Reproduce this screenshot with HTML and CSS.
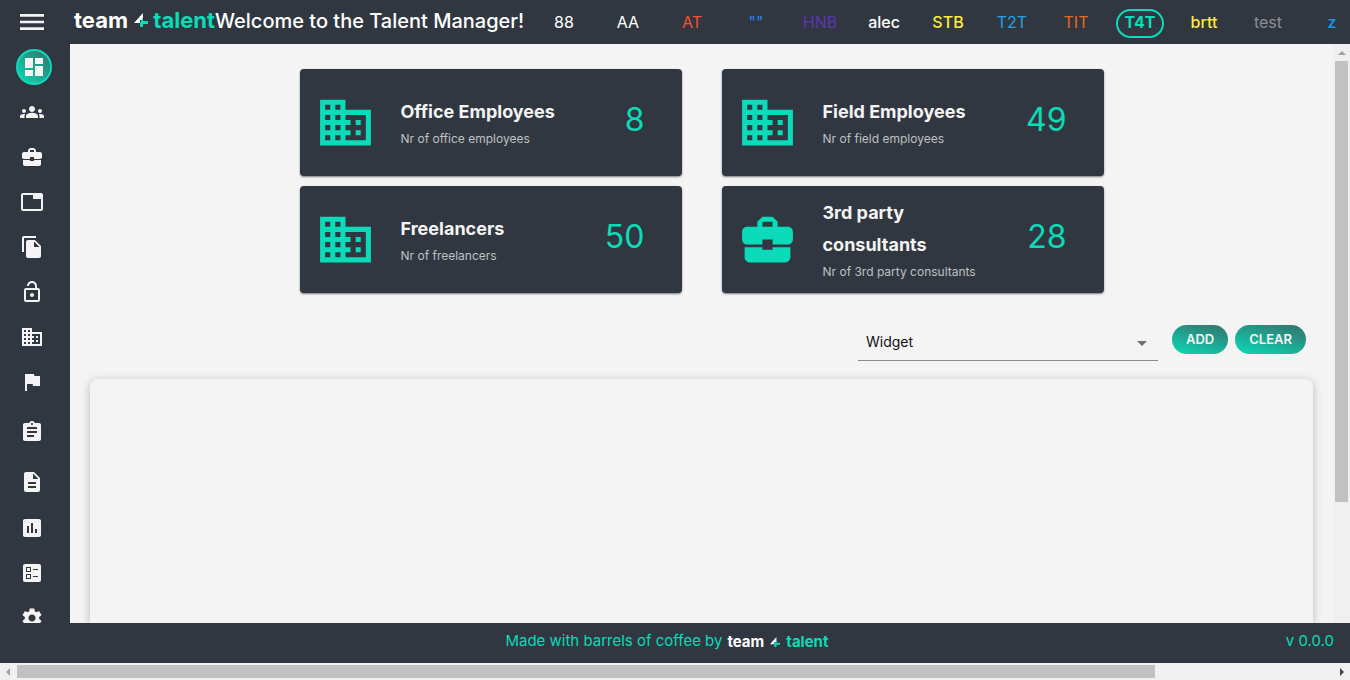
FILE: index.html
```html
<!DOCTYPE html>
<html lang="en">
<head>
<meta charset="utf-8">
<title>Talent Manager</title>
<link rel="stylesheet" href="styles.css">
</head>
<body>
<svg class="defs" aria-hidden="true">
  <symbol id="building" viewBox="0 0 24 24"><path d="M12 7V3H2v18h20V7H12zM6 19H4v-2h2v2zm0-4H4v-2h2v2zm0-4H4V9h2v2zm0-4H4V5h2v2zm4 12H8v-2h2v2zm0-4H8v-2h2v2zm0-4H8V9h2v2zm0-4H8V5h2v2zm10 12h-8v-2h2v-2h-2v-2h2v-2h-2V9h8v10zm-2-8h-2v2h2v-2zm0 4h-2v2h2v-2z"/></symbol>
  <symbol id="case" viewBox="0 0 24 24"><path d="M10 16v-1H3.010L3 19c0 1.110.89 2 2 2h14c1.110 0 2-.89 2-2v-4h-7v1h-4zm10-9h-4.010V5l-2-2h-4l-2 2v2H4c-1.100 0-2 .9-2 2v3c0 1.110.89 2 2 2h6v-2h4v2h6c1.100 0 2-.9 2-2V9c0-1.100-.9-2-2-2zm-6 0h-4V5h4v2z"/></symbol>
  <symbol id="bolt" viewBox="0 0 14 14"><path fill="#fff" d="M9 0v7H6v3H0z"/><path class="accent" d="M9 4v4h5v3H9v3H6v-4z"/></symbol>
</svg>
<header class="topbar">
  <button class="menu" aria-label="Menu"><svg viewBox="0 0 24 24"><path d="M3 18h18v-2H3v2zm0-5h18v-2H3v2zm0-7v2h18V6H3z"/></svg></button>
  <a class="logo" href="#"><span>team</span><svg><use href="#bolt"/></svg><span class="talent">talent</span></a>
  <h1>Welcome to the Talent Manager!</h1>
  <nav class="teams" aria-label="Teams">
    <a href="#">88</a><a href="#">AA</a><a class="red" href="#">AT</a><a class="blue" href="#">""</a><a class="purple" href="#">HNB</a><a class="medium" href="#">alec</a><a class="yellow medium" href="#">STB</a><a class="sky" href="#">T2T</a><a class="orange" href="#">TIT</a><a class="current" href="#"><span>T4T</span></a><a class="yellow medium" href="#">brtt</a><a class="grey" href="#">test</a><a class="azure medium" href="#">z</a>
  </nav>
</header>
<div class="middle">
  <nav class="sidebar" aria-label="Main">
    <a class="active" href="#" aria-label="Dashboard"><svg viewBox="0 0 24 24"><path d="M3 13h8V3H3v10zm0 8h8v-6H3v6zm10 0h8V11h-8v10zm0-18v6h8V3h-8z"/></svg></a>
    <a href="#" aria-label="Groups"><svg viewBox="0 0 24 24"><path d="M12 12.750c1.630 0 3.070.39 4.240.9 1.080.48 1.760 1.560 1.760 2.730V18H6v-1.610c0-1.180.68-2.260 1.760-2.730 1.170-.52 2.610-.91 4.240-.91zM4 13c1.100 0 2-.9 2-2s-.9-2-2-2-2 .9-2 2 .9 2 2 2zm1.130 1.100C4.760 14.040 4.390 14 4 14c-.99 0-1.930.21-2.780.58C.48 14.900 0 15.620 0 16.430V18h4.500v-1.610c0-.83.23-1.610.63-2.290zM20 13c1.100 0 2-.9 2-2s-.9-2-2-2-2 .9-2 2 .9 2 2 2zm4 3.430c0-.81-.48-1.530-1.220-1.850-.85-.37-1.790-.58-2.780-.58-.39 0-.76.04-1.130.1.400.68.630 1.460.630 2.290V18H24v-1.570zM12 6c1.660 0 3 1.340 3 3s-1.340 3-3 3-3-1.340-3-3 1.340-3 3-3z"/></svg></a>
    <a href="#" aria-label="Jobs"><svg><use href="#case"/></svg></a>
    <a href="#" aria-label="Tabs"><svg viewBox="0 0 24 24"><path d="M21 3H3c-1.100 0-2 .9-2 2v14c0 1.100.9 2 2 2h18c1.100 0 2-.9 2-2V5c0-1.100-.9-2-2-2zm0 16H3V5h10v4h8v10z"/></svg></a>
    <a href="#" aria-label="Files"><svg viewBox="0 0 24 24"><path d="M16 1H4c-1.100 0-2 .9-2 2v14h2V3h12V1zm-1 4l6 6v10c0 1.100-.9 2-2 2H7.990C6.890 23 6 22.100 6 21l.01-14c0-1.100.89-2 1.990-2h7zm-1 7h5.500L14 6.500V12z"/></svg></a>
    <a href="#" aria-label="Access"><svg viewBox="0 0 24 24"><path d="M12 17c1.100 0 2-.9 2-2s-.9-2-2-2-2 .9-2 2 .9 2 2 2zm6-9h-1V6c0-2.760-2.240-5-5-5S7 3.240 7 6h1.900c0-1.710 1.390-3.100 3.100-3.100s3.100 1.390 3.100 3.100v2H6c-1.100 0-2 .9-2 2v10c0 1.100.9 2 2 2h12c1.100 0 2-.9 2-2V10c0-1.100-.9-2-2-2zm0 12H6V10h12v10z"/></svg></a>
    <a href="#" aria-label="Companies"><svg><use href="#building"/></svg></a>
    <a href="#" aria-label="Flags"><svg viewBox="0 0 24 24"><path d="M14.400 6L14 4H5v17h2v-7h5.600l.4 2h7V6z"/></svg></a>
    <a class="tall" href="#" aria-label="Tasks"><svg viewBox="0 0 24 24"><path d="M19 3h-4.180C14.400 1.840 13.300 1 12 1c-1.300 0-2.400.84-2.820 2H5c-1.100 0-2 .9-2 2v14c0 1.100.9 2 2 2h14c1.100 0 2-.9 2-2V5c0-1.100-.9-2-2-2zm-7 0c.55 0 1 .45 1 1s-.45 1-1 1-1-.45-1-1 .45-1 1-1zm2 14H7v-2h7v2zm3-4H7v-2h10v2zm0-4H7V7h10v2z"/></svg></a>
    <a class="doc" href="#" aria-label="Documents"><svg viewBox="0 0 24 24"><path d="M14 2H6c-1.100 0-1.990.9-1.990 2L4 20c0 1.100.89 2 1.990 2H18c1.100 0 2-.9 2-2V8l-6-6zm2 16H8v-2h8v2zm0-4H8v-2h8v2zm-3-5V3.500L18.500 9H13z"/></svg></a>
    <a href="#" aria-label="Statistics"><svg viewBox="0 0 24 24"><path d="M19 3H5c-1.100 0-2 .9-2 2v14c0 1.100.9 2 2 2h14c1.100 0 2-.9 2-2V5c0-1.100-.9-2-2-2zM9 17H7v-7h2v7zm4 0h-2V7h2v10zm4 0h-2v-4h2v4z"/></svg></a>
    <a href="#" aria-label="Forms"><svg viewBox="0 0 24 24"><path fill-rule="evenodd" d="M5 3h14a2 2 0 0 1 2 2v14a2 2 0 0 1-2 2H5a2 2 0 0 1-2-2V5a2 2 0 0 1 2-2zM6 6v5h5V6zm1 1h3v3H7zM6 13v5h5v-5zm1 1h3v3H7zM13 8v1h5V8zm0 7v1h5v-1z"/></svg></a>
    <a href="#" aria-label="Settings"><svg viewBox="0 0 24 24"><path d="M19.140 12.940c.04-.3.060-.61.060-.94 0-.32-.02-.64-.07-.94l2.030-1.580c.18-.14.23-.41.120-.61l-1.920-3.320c-.12-.22-.37-.29-.59-.22l-2.390.96c-.5-.38-1.030-.7-1.620-.94l-.36-2.540c-.04-.24-.24-.41-.48-.41h-3.840c-.24 0-.43.17-.47.410l-.36 2.540c-.59.240-1.130.570-1.620.940l-2.390-.96c-.22-.08-.47 0-.59.220L2.740 8.870c-.12.210-.08.470.120.610l2.030 1.580c-.05.300-.09.630-.09.940s.02.640.07.940l-2.030 1.580c-.18.140-.23.410-.12.610l1.920 3.320c.12.220.37.290.59.220l2.390-.96c.5.380 1.030.7 1.620.940l.36 2.540c.05.240.24.410.48.410h3.840c.24 0 .44-.17.470-.41l.36-2.540c.59-.24 1.130-.56 1.620-.94l2.390.96c.22.080.47 0 .59-.22l1.920-3.320c.12-.22.070-.47-.12-.61l-2.010-1.580zM12 15.600c-1.980 0-3.600-1.620-3.600-3.600s1.620-3.600 3.600-3.600 3.600 1.620 3.600 3.600-1.620 3.600-3.600 3.600z"/></svg></a>
  </nav>
  <main>
    <section class="cards" aria-label="Totals">
      <article class="card"><svg><use href="#building"/></svg><div class="label"><h2>Office Employees</h2><p>Nr of office employees</p></div><strong>8</strong></article>
      <article class="card"><svg><use href="#building"/></svg><div class="label"><h2>Field Employees</h2><p>Nr of field employees</p></div><strong>49</strong></article>
      <article class="card"><svg><use href="#building"/></svg><div class="label"><h2>Freelancers</h2><p>Nr of freelancers</p></div><strong>50</strong></article>
      <article class="card"><svg><use href="#case"/></svg><div class="label"><h2>3rd party consultants</h2><p>Nr of 3rd party consultants</p></div><strong>28</strong></article>
    </section>
    <form class="controls">
      <div class="picker"><select aria-label="Widget"><option>Widget</option></select></div>
      <button class="pill" type="button">ADD</button>
      <button class="pill" type="button">CLEAR</button>
    </form>
    <section class="board" aria-label="Widgets"></section>
  </main>
  <div class="bar vertical" aria-hidden="true"><i class="arrow up"></i><div class="track"><div class="thumb"></div></div></div>
</div>
<footer>
  <p class="made">Made with barrels of coffee by <a class="logo small" href="#"><span>team</span><svg><use href="#bolt"/></svg><span class="talent">talent</span></a></p>
  <p class="version">v 0.0.0</p>
</footer>
<div class="bar horizontal" aria-hidden="true"><i class="arrow left"></i><div class="track"><div class="thumb"></div></div><i class="arrow right"></i></div>
</body>
</html>
```
FILE: styles.css
```css
* { box-sizing: border-box; }
:root { --dark: #313740; --light: #f4f4f4; --accent: #0adbb8; --shade: linear-gradient(to top right, #0adbb8, #357069); }
body { margin: 0; height: 100vh; display: flex; flex-direction: column; overflow: hidden; background: var(--light); font-family: Inter, "Open Sans", sans-serif; }
h1, h2, p { margin: 0; }
a { color: inherit; text-decoration: none; }
button { border: 0; font-family: inherit; cursor: pointer; }
.defs { position: absolute; width: 0; height: 0; }
.accent { fill: var(--accent); }

.topbar { flex: none; height: 44px; display: flex; align-items: center; background: var(--dark); color: #fff; overflow: hidden; }
.menu { flex: none; width: 74px; height: 44px; padding: 0 0 0 16px; background: none; display: flex; align-items: center; }
.menu svg { width: 32px; height: 32px; fill: var(--light); }
.logo { flex: none; display: flex; align-items: center; justify-content: space-between; width: 141px; font-size: 22px; line-height: 24px; font-weight: 700; color: #fff; padding-bottom: 4px; }
.logo svg { width: 14px; height: 14px; }
.talent { color: var(--accent); }
h1 { flex: none; width: 317px; padding-bottom: 2px; font-size: 20px; line-height: 24px; font-weight: 500; white-space: nowrap; }
.teams { flex: none; display: flex; font-size: 16px; line-height: 24px; }
.teams a { width: 64px; height: 44px; display: flex; align-items: center; justify-content: center; }
.medium { font-weight: 500; }
.red { color: #f4512c; }
.blue { color: #2d7ff0; }
.purple { color: #5e35b1; }
.yellow { color: #ffeb3b; }
.sky { color: #1fa2e8; }
.orange { color: #e8681e; }
.grey { color: #8d8d92; }
.azure { color: #0d9df5; }
.current { color: var(--accent); font-weight: 700; }
.current span { width: 48px; height: 29px; margin-top: 3px; border: 2px solid; border-radius: 15px; text-align: center; line-height: 22px; }

.middle { flex: 1; min-height: 0; display: flex; }
.sidebar { flex: none; width: 70px; background: var(--dark); overflow: hidden; padding-left: 16px; }
.sidebar a { height: 45px; width: 32px; display: flex; align-items: center; justify-content: center; }
.sidebar svg { width: 24px; height: 24px; fill: var(--light); }
.sidebar .active { width: 36px; height: 36px; margin: 5px 0 4px; border: 2px solid var(--accent); border-radius: 50%; background: var(--shade); }
.sidebar .tall { height: 55px; }
.sidebar .doc { height: 46px; }

main { flex: 1; min-width: 0; padding: 25px 20px 0; display: flex; flex-direction: column; overflow: hidden; }
.cards { width: 100%; max-width: 804px; margin: 0 auto; display: grid; grid-template-columns: 1fr 1fr; gap: 10px 40px; }
.card { min-height: 107px; padding: 0 37px 0 15px; display: flex; align-items: center; background: var(--dark); border-radius: 4px; box-shadow: 0 1px 2px rgba(0, 0, 0, .5); }
.card svg { flex: none; width: 61px; height: 61px; fill: var(--accent); margin-right: 25px; }
.label { width: 164px; }
.label h2 { font-size: 18px; line-height: 32px; font-weight: 700; color: var(--light); }
.label p { font-size: 12px; line-height: 22px; color: #bfc0c2; white-space: nowrap; }
.card strong { margin-left: auto; padding-bottom: 6px; font-size: 32px; line-height: 40px; font-weight: 400; color: var(--accent); }

.controls { margin: 32px 7px 0 0; display: flex; justify-content: flex-end; gap: 7px; }
.picker { width: 300px; height: 36px; margin-right: 7px; position: relative; border-bottom: 1px solid #8c8c8c; }
.picker select { appearance: none; width: 100%; height: 33px; padding: 0 8px; border: 0; background: none; font: 400 14px/20px Inter, sans-serif; color: #111; }
.picker::after { content: ""; position: absolute; right: 11px; top: 16px; border: 5px solid transparent; border-top-color: #707070; border-bottom: 0; pointer-events: none; }
.pill { height: 29px; padding: 0 14px; border-radius: 15px; background: linear-gradient(15deg, #0adbb8, #357069); color: var(--light); font-size: 13px; line-height: 27px; font-weight: 600; }
.board { flex: 1; margin-top: 18px; border-radius: 8px 8px 0 0; background: var(--light); box-shadow: 0 2px 10px rgba(0, 0, 0, .25); }

footer { flex: none; height: 40px; display: flex; align-items: center; padding: 0 16px 4px 48px; background: var(--dark); color: var(--accent); font-size: 15px; line-height: 20px; }
.made { flex: 1; display: flex; align-items: center; justify-content: center; gap: 5px; }
.logo.small { width: 101px; font-size: 15px; line-height: 20px; padding: 2px 0 0; }
.small svg { width: 10px; height: 10px; }

.bar { flex: none; display: flex; background: #f0f0f0; }
.vertical { width: 17px; flex-direction: column; align-items: center; padding: 0 2px 17px; }
.horizontal { height: 17px; align-items: center; }
.track { flex: 1; }
.vertical .track { width: 100%; }
.horizontal .track { height: 13px; }
.thumb { background: #c1c1c1; }
.vertical .thumb { height: 81%; }
.horizontal .thumb { width: 86.5%; height: 100%; }
.arrow { flex: none; border: 4px solid transparent; }
.up { border-top: 0; border-bottom-color: #a0a0a0; margin: 7px 0 6px; }
.left { border-left: 0; border-right-color: #a0a0a0; margin: 0 7px 0 6px; }
.right { border-right: 0; border-left-color: #444; margin: 0 6px 0 7px; }
```
